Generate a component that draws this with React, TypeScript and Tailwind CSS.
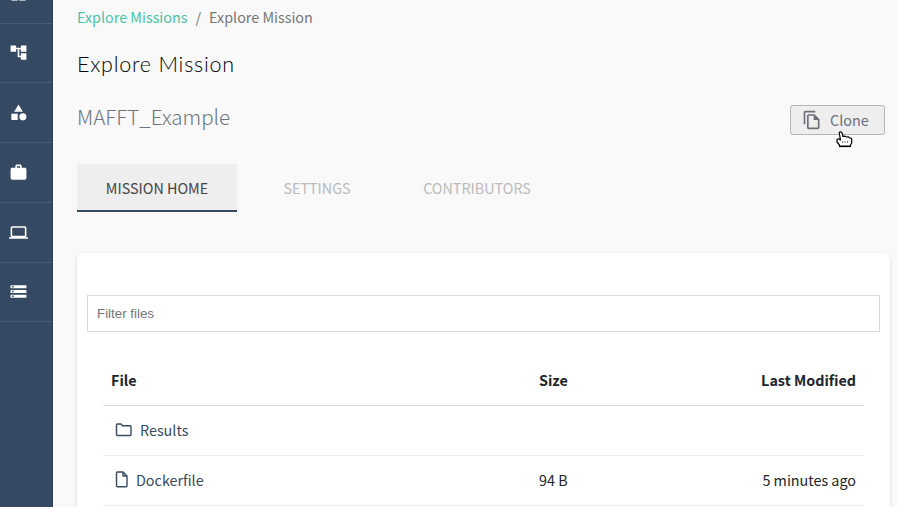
import React from 'react';
import {
  MdAccountTree,
  MdCategory,
  MdWork,
  MdLaptop,
  MdStorage,
  MdDashboard,
  MdOutlineFileCopy,
} from 'react-icons/md';

const sans = "font-['Noto_Sans_CJK_SC','Noto_Sans',sans-serif]";

function SideItem({ className, children }: { className: string; children: React.ReactNode }) {
  return (
    <a className={`flex shrink-0 items-center border-b border-[#4a5a75] pl-[9px] text-white ${className}`}>
      {children}
    </a>
  );
}

function Sidebar() {
  return (
    <nav className="flex h-full w-[53px] shrink-0 flex-col overflow-hidden border-r border-[#2c405c] bg-[#364962]">
      <SideItem className="-mt-9 h-[60px]">
        <MdDashboard size={19} className="shrink-0 opacity-80" />
      </SideItem>
      <SideItem className="h-[59px] pb-px"><MdAccountTree size={19} /></SideItem>
      <SideItem className="h-[60px]"><MdCategory size={19} /></SideItem>
      <SideItem className="h-[60px]"><MdWork size={19} /></SideItem>
      <SideItem className="h-[60px]"><MdLaptop size={19} /></SideItem>
      <SideItem className="h-[59px] pb-px"><MdStorage size={19} /></SideItem>
    </nav>
  );
}

function HandCursor() {
  return (
    <svg className="absolute left-[45px] top-[25px]" width="17" height="17" viewBox="0 0 17 17">
      <path
        d="M3.200 1.800Q3.500.8 4.500.8T6.200 2.200L7 5.500 9 5.200 10.500 6 12.500 5.800 13.500 6.800 15 7 15.700 8.500V12L14.500 14V15.500H3.500V14L1 11V8.500L2.500 7.800 4.500 9z"
        fill="white"
        stroke="black"
        strokeWidth="1.200"
        strokeLinejoin="round"
      />
      <path d="M3.500 15.300h11" stroke="black" strokeWidth="1.600" />
      <path d="M6 11h1M8.500 11h1M11 11h1" stroke="black" strokeWidth="1.200" />
    </svg>
  );
}

function FolderIcon() {
  return (
    <svg width="17" height="14" viewBox="0 0 17 14" fill="none" stroke="#364962" strokeWidth="1.400" strokeLinejoin="round">
      <path d="M1.500 11.500V2q0-1 1-1h3.500l1.500 1.700H15q1 0 1 1v7.800q0 1-1 1H2.500q-1 0-1-1z" />
    </svg>
  );
}

function FileIcon() {
  return (
    <svg width="13" height="17" viewBox="0 0 13 17" fill="none" stroke="#364962" strokeWidth="1.400" strokeLinejoin="round">
      <path d="M2.500 1h5.500l4 4v9.700q0 1-1 1H2.500q-1 0-1-1V2q0-1 1-1z" />
      <path d="M8 1v4h4" />
    </svg>
  );
}

export default function App() {
  return (
    <div className={`flex h-[507px] w-[897px] overflow-hidden bg-[#f9f9f9] text-[14.350px] leading-6 text-[#212529] ${sans}`}>
      <Sidebar />
      <main className="flex min-w-0 flex-1 flex-col pl-6">
        <div className="flex h-6 shrink-0 items-center whitespace-pre pt-[9px] text-[#777]">
          <a className="text-[#4bc1a9]">Explore Missions</a>
          <span className="px-2">/</span>
          <span>Explore Mission</span>
        </div>
        <h1 className="mt-6 h-8 shrink-0 font-['Lato',sans-serif] text-[21.500px] font-light leading-8 tracking-[0.780px] text-black">
          Explore Mission
        </h1>
        <div className="mt-[25px] flex h-[30px] shrink-0 items-center justify-between pr-3">
          <h2 className="pb-[9px] text-[20.620px] font-light text-[#6c757d]">MAFFT_Example</h2>
          <button className="relative flex h-[30px] w-[95px] items-center rounded-[3px] border border-[#b5b5b5] bg-[#eeeeee] pl-[11px] text-[#6c7079]">
            <MdOutlineFileCopy size={20} />
            <span className="ml-2">Clone</span>
            <HandCursor />
          </button>
        </div>
        <div className="mt-[29px] flex h-12 shrink-0">
          <div className="flex w-40 items-center justify-center border-b-2 border-[#364962] bg-[#eeeeee] pt-0.5 text-[#444]">MISSION HOME</div>
          <div className="flex w-40 items-center justify-center text-[#bbb]">SETTINGS</div>
          <div className="flex w-40 items-center justify-center text-[#bbb]">CONTRIBUTORS</div>
        </div>
        <section className="mr-[7px] mt-[41px] flex flex-1 flex-col rounded-t-[7px] bg-white px-2.5 pt-[42px] shadow-[0_1px_4px_rgba(0,0,0,0.12)]">
          <input
            className="h-[37px] w-full shrink-0 border border-[#d9d9d9] px-[9px] font-['Liberation_Sans',sans-serif] text-[13.333px] placeholder:text-[#757575]"
            placeholder="Filter files"
          />
          <div className="mx-4 mt-6 flex flex-col">
            <div className="flex h-[50px] items-center border-b border-[#dcdcdc] px-2 pb-0.5 font-bold">
              <span className="w-[428px]">File</span>
              <span>Size</span>
              <span className="ml-auto">Last Modified</span>
            </div>
            <div className="flex h-[50px] items-center border-b border-[#ededed] px-2 pb-0.5">
              <span className="flex w-[428px] items-center gap-2 pl-1 text-[#364962]"><FolderIcon />Results</span>
            </div>
            <div className="flex h-[50px] items-center border-b border-[#ededed] px-2 pb-0.5">
              <span className="flex w-[428px] items-center gap-2 pl-1 text-[#364962]"><FileIcon />Dockerfile</span>
              <span>94 B</span>
              <span className="ml-auto">5 minutes ago</span>
            </div>
          </div>
        </section>
      </main>
    </div>
  );
}
